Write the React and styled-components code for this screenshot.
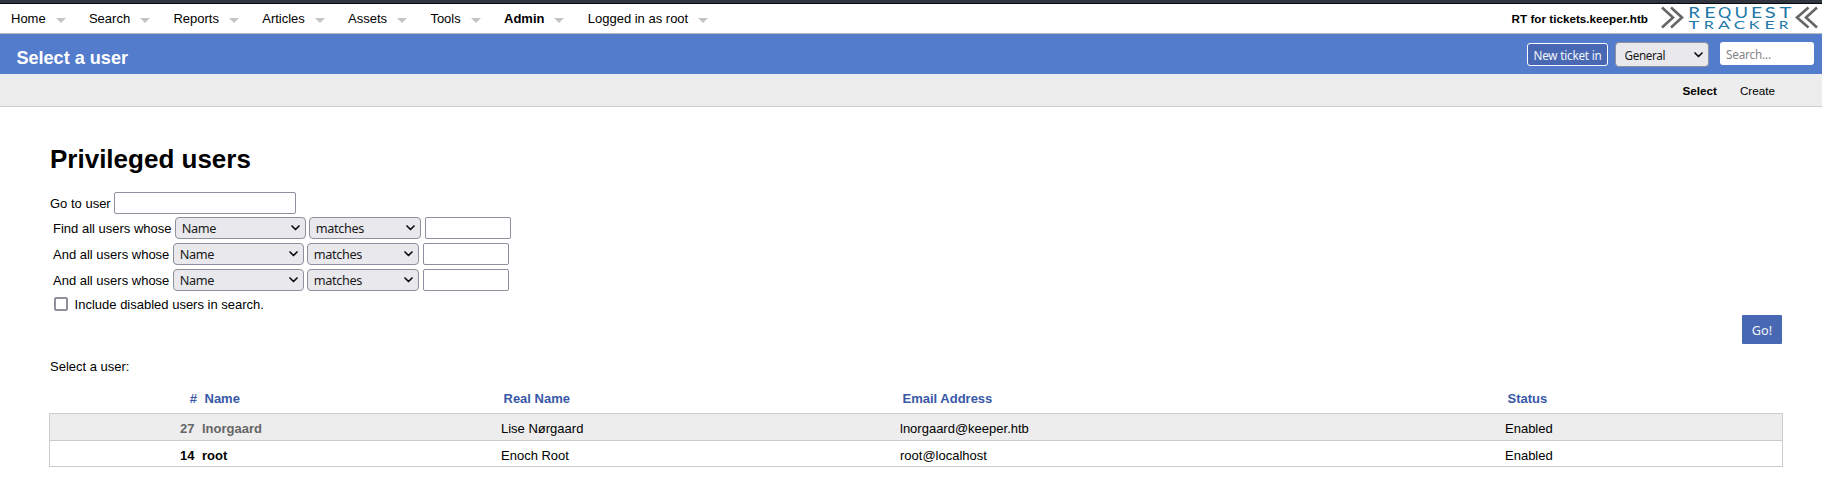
import React from 'react';
import styled, { createGlobalStyle } from 'styled-components';

const Global = createGlobalStyle`
  * { box-sizing: border-box; }
  html, body { margin: 0; padding: 0; background: #fff; overflow: hidden; }
  body { font: 13px/16px "Liberation Sans", Arial, sans-serif; color: #000; }
`;
const controlFont = '"Noto Sans", sans-serif';

const Page = styled.div`width: 1822px; height: 477px; display: flex; flex-direction: column;`;
const TopStrip = styled.div`height: 4px; background: #2f343f; border-bottom: 1px solid #08090c; flex: none;`;
const NavBar = styled.header`
  height: 30px; flex: none; display: flex; align-items: center; justify-content: space-between;
  border-bottom: 1px solid #bbb; padding: 0 4px 0 11px;
`;
const Menu = styled.nav`display: flex; height: 29px; padding-top: 7px;`;
const MenuItem = styled.a`
  display: flex; margin-right: 23.27px; white-space: nowrap;
  font-weight: ${p => (p.$active ? 700 : 400)};
  &::after {
    content: ""; margin: 7px 0 0 10px; width: 0; height: 0;
    border: 5px solid transparent; border-top: 5px solid #c4c4c4; border-bottom: 0;
  }
`;
const Brand = styled.div`display: flex; align-items: center; height: 29px; font-size: 11.7px; font-weight: 700; gap: 13px;`;
const BrandName = styled.span`padding-top: 1px;`;
const TitleBar = styled.div`
  height: 40px; flex: none; background: #547ccc; display: flex; justify-content: space-between;
  padding: 8px 8px 0 16.4px;
`;
const Title = styled.h1`margin: 6px 0 0; font-size: 18.1px; line-height: 20px; color: #fff;`;
const Tools = styled.div`display: flex; align-items: flex-start;`;
const TicketButton = styled.button`
  width: 81px; height: 23px; margin: 1px 7px 0 0; padding: 0; border: 1px solid #fff; border-radius: 3px;
  background: #4868b3; color: #f4f6fb; font: 11.7px/20px ${controlFont}; letter-spacing: -0.2px; white-space: nowrap;
`;
const SearchInput = styled.input`
  width: 94px; height: 23px; margin-left: 11px; padding: 0 6px; border: 0; border-radius: 3px; background: #fff;
  font: 11.7px ${controlFont}; letter-spacing: -0.15px;
  &::placeholder { color: #858585; opacity: 1; }
`;
const SubNav = styled.nav`
  height: 33px; flex: none; background: #ededed; border-bottom: 1px solid #ccc;
  display: flex; justify-content: flex-end; gap: 23px; padding: 9px 47px 0 0; font-size: 11.7px;
`;
const SubLink = styled.a`font-weight: ${p => (p.$active ? 700 : 400)};`;

const Content = styled.main`padding: 37px 39px 0 49px; display: flex; flex-direction: column;`;
const Heading = styled.h2`margin: 0 0 18px 1px; font-size: 26px; line-height: 30px;`;
const Row = styled.div`
  display: flex; align-items: center; height: ${p => p.$h || 26}px; padding-left: ${p => p.$left ?? 4}px;
  margin-bottom: ${p => p.$after || 0}px;
`;
const RowLabel = styled.label`width: ${p => p.$w || 200}px; padding-top: 2px; white-space: nowrap;`;
const TextInput = styled.input`
  width: ${p => p.$w}px; height: 22px; border: 1px solid #8f8f9d; border-radius: 2px; background: #fff; padding: 0;
`;
const SelectWrap = styled.div`
  display: grid; align-items: center; width: ${p => p.$w}px; height: ${p => p.$h || 22}px; margin-right: ${p => p.$gap ?? 3}px;
  > * { grid-area: 1 / 1; }
  > svg { justify-self: end; margin-right: 6px; pointer-events: none; }
`;
const NativeSelect = styled.select`
  appearance: none; width: 100%; height: 100%; border: 1px solid #8f8f9d; border-radius: 4px; background: #e9e9ed;
  padding: 0 0 0 ${p => p.$pad || 5.8}px; color: #1a1a1a; font: ${p => p.$size || 12.7}px ${controlFont};
  letter-spacing: -0.36px;
`;
const Check = styled.input`
  appearance: none; width: 14px; height: 14px; margin: 0 6.6px 0 1px; border: 2px solid #8f8f9d; border-radius: 2px; background: #fff;
`;
const Actions = styled.div`display: flex; justify-content: flex-end; padding-right: 1px; height: 29px;`;
const GoButton = styled.button`
  width: 40px; height: 29px; padding: 0; border: 0; border-radius: 1px; background: #4868b3; color: #f4f6fb;
  font: 12.7px ${controlFont};
`;
const Caption = styled.p`margin: 15px 0 0 1px; height: 16px;`;
const columns = '152px 299px 399px 605px 1fr';
const HeadRow = styled.div`
  display: grid; grid-template-columns: ${columns}; margin-top: 16px; height: 22px; padding-left: 3.5px;
  font-weight: 700; color: #3858a7;
`;
const Users = styled.div`border: 1px solid #ccc; height: 54px;`;
const UserRow = styled.div`
  display: grid; grid-template-columns: ${columns}; height: 26px; padding-top: 7px;
  background: ${p => (p.$shade ? '#ededed' : '#fff')};
  & + & { border-top: 1px solid #ccc; }
`;
const Cell = styled.span`
  font-weight: ${p => (p.$bold ? 700 : 'inherit')}; color: ${p => (p.$dim ? '#666' : 'inherit')};
  padding-right: ${p => (p.$num ? 7.5 : 0)}px; text-align: ${p => (p.$num ? 'right' : 'left')};
`;
const LogoArt = styled.svg`display: block; overflow: visible;`;

function Dropdown({ value, w, h, gap, pad, size }) {
  return (
    <SelectWrap $w={w} $h={h} $gap={gap}>
      <NativeSelect $pad={pad} $size={size}><option>{value}</option></NativeSelect>
      <svg width="9" height="6" viewBox="0 0 9 6"><path d="M1 1l3.5 3.5L8 1" fill="none" stroke="#111" strokeWidth="1.7" strokeLinecap="round" strokeLinejoin="round" /></svg>
    </SelectWrap>
  );
}

// Each letter is [glyph, x, horizontal stretch]; the wordmark uses a wide face.
const Letters = ({ row, y }) => row.map(([c, x, sx]) => (
  <text key={x} transform={`translate(${x} ${y}) scale(${sx} 1)`}>{c}</text>
));
const requestRow = [['R', 27.2, 1.3], ['E', 43.2, 1.38], ['Q', 57, 1.15], ['U', 73.5, 1.28], ['E', 90, 1.35], ['S', 103.7, 1.4], ['T', 118.4, 1.4]];
const trackerRow = [['T', 27.4, 1.5], ['R', 42.8, 1.35], ['A', 57, 1.45], ['C', 72.7, 1.42], ['K', 87.8, 1.35], ['E', 103.5, 1.48], ['R', 117.8, 1.28]];

function Logo() {
  return (
    <LogoArt width="157" height="29" viewBox="0 0 157 29" fontFamily="Lato, sans-serif" fontWeight="400">
      <g fill="none" stroke="#666" strokeWidth="2.6">
        <path d="M1 3.500L12 13.500L1 23.500M10 3.500L21 13.500L10 23.500" />
        <path d="M147.500 3.500L136 13.500L147.500 23.500M156 3.500L145 13.500L156 23.500" />
      </g>
      <g fill="#2278a9" fontSize="14.4"><Letters row={requestRow} y={13.6} /></g>
      <g fill="#2278a9" fontSize="12"><Letters row={trackerRow} y={25.2} /></g>
    </LogoArt>
  );
}

const menu = ['Home', 'Search', 'Reports', 'Articles', 'Assets', 'Tools', 'Admin', 'Logged in as root'];
const criteria = [['Find all users whose', 122], ['And all users whose', 120], ['And all users whose', 120]];
const users = [
  { id: 27, name: 'lnorgaard', real: 'Lise Nørgaard', email: 'lnorgaard@keeper.htb', dim: true },
  { id: 14, name: 'root', real: 'Enoch Root', email: 'root@localhost' },
];

export default function App() {
  return (
    <Page>
      <Global />
      <TopStrip />
      <NavBar>
        <Menu>{menu.map(m => <MenuItem key={m} $active={m === 'Admin'}>{m}</MenuItem>)}</Menu>
        <Brand><BrandName>RT for tickets.keeper.htb</BrandName><Logo /></Brand>
      </NavBar>
      <TitleBar>
        <Title>Select a user</Title>
        <Tools>
          <TicketButton>New ticket in</TicketButton>
          <Dropdown value="General" w={94} h={25} gap={0} pad={8.5} size={11.7} />
          <SearchInput placeholder="Search..." />
        </Tools>
      </TitleBar>
      <SubNav><SubLink $active>Select</SubLink><SubLink>Create</SubLink></SubNav>
      <Content>
        <Heading>Privileged users</Heading>
        <Row $h={22} $left={1} $after={1}><RowLabel $w={64}>Go to user</RowLabel><TextInput $w={182} /></Row>
        {criteria.map(([label, w], i) => (
          <Row key={i}>
            <RowLabel $w={w}>{label}</RowLabel>
            <Dropdown value="Name" w={131} />
            <Dropdown value="matches" w={112} gap={4} />
            <TextInput $w={86} />
          </Row>
        ))}
        <Row $h={22}><Check type="checkbox" /><RowLabel>Include disabled users in search.</RowLabel></Row>
        <Actions><GoButton>Go!</GoButton></Actions>
        <Caption>Select a user:</Caption>
        <HeadRow><Cell $num>#</Cell><Cell>Name</Cell><Cell>Real Name</Cell><Cell>Email Address</Cell><Cell>Status</Cell></HeadRow>
        <Users>
          {users.map(u => (
            <UserRow key={u.id} $shade={u.dim}>
              <Cell $num $bold $dim={u.dim}>{u.id}</Cell>
              <Cell $bold $dim={u.dim}>{u.name}</Cell>
              <Cell>{u.real}</Cell><Cell>{u.email}</Cell><Cell>Enabled</Cell>
            </UserRow>
          ))}
        </Users>
      </Content>
    </Page>
  );
}
